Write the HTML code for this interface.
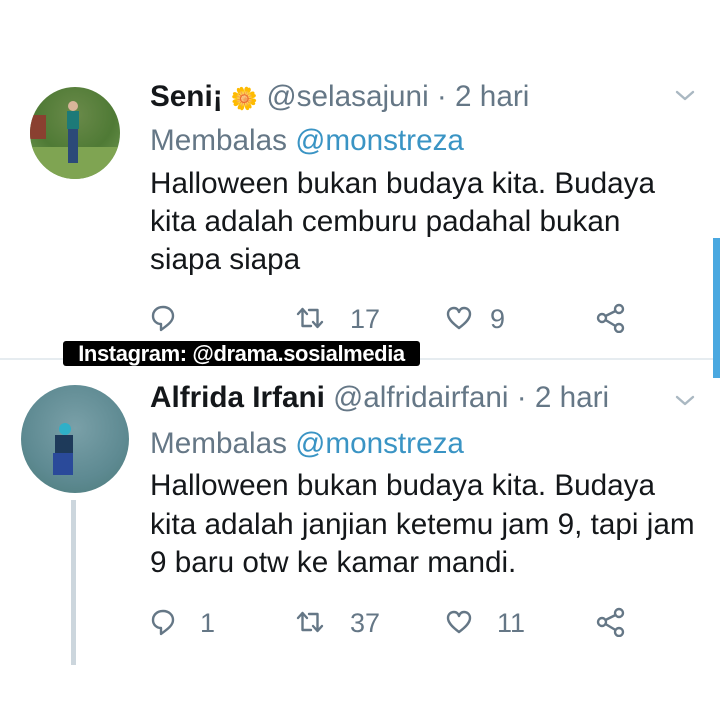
<!DOCTYPE html>
<html><head><meta charset="utf-8"><style>
body{margin:0;width:720px;height:720px;background:#fff;position:relative;overflow:hidden;font-family:"Liberation Sans",sans-serif;}
.a{position:absolute;white-space:nowrap;}
.t{font-size:29.7px;color:#14171a;}
.g{color:#657786;}
.b{color:#3a94c4;}
.n{font-weight:bold;color:#14171a;}
.cnt{font-size:27px;color:#657786;}
svg.i{position:absolute;fill:none;stroke:#657786;stroke-width:2.4;stroke-linecap:round;stroke-linejoin:round;}
</style></head><body>
<!-- avatar 1 -->
<div class="a" style="left:30px;top:87px;width:90px;height:92px;border-radius:50%;background:radial-gradient(circle at 50% 30%,#6a8a4a,#4f7a35 50%,#7aa05a);overflow:hidden">
 <div style="position:absolute;left:0;top:60px;width:90px;height:32px;background:#7fa452"></div>
 <div style="position:absolute;left:38px;top:14px;width:10px;height:10px;border-radius:50%;background:#d9b59a"></div>
 <div style="position:absolute;left:37px;top:24px;width:12px;height:18px;background:#1d7a78"></div>
 <div style="position:absolute;left:38px;top:42px;width:10px;height:34px;background:#2c4a78"></div>
 <div style="position:absolute;left:0;top:28px;width:16px;height:24px;background:#8a4030"></div>
</div>
<div class="a t" style="left:150px;top:80px;"><span class="n">Seni¡</span> <span style="font-size:22px">🌼</span> <span class="g">@selasajuni · 2 hari</span></div>
<svg class="i" style="left:674px;top:88px" width="22" height="16"><path d="M3 4 L11 11 L19 4" stroke="#aab8c2"/></svg>
<div class="a t g" style="left:150px;top:124px;">Membalas <span class="b">@monstreza</span></div>
<div class="a t" style="left:150px;top:165px;line-height:38px">Halloween bukan budaya kita. Budaya<br>kita adalah cemburu padahal bukan<br>siapa siapa</div>
<!-- actions 1 -->
<svg class="i" style="left:150px;top:304px" width="26" height="30"><path d="M13 3 C6 3 3 8 3 12 C3 17 7 20 11 20 L11 26 C16 22 23 18 23 12 C23 7 19 3 13 3Z"/></svg>
<svg class="i" style="left:295px;top:305px" width="30" height="26"><path d="M3 9 L7.5 4 L12 9 M7.5 4 V21 H16 M27 17 L22.5 22 L18 17 M22.5 22 V5 H14"/></svg>
<div class="a cnt" style="left:350px;top:304px">17</div>
<svg class="i" style="left:445px;top:305px" width="28" height="26"><path d="M14 23 C6 17 3 13 3 9 C3 5 6 3 9 3 C11 3 13 4 14 7 C15 4 17 3 19 3 C22 3 25 5 25 9 C25 13 22 17 14 23Z"/></svg>
<div class="a cnt" style="left:490px;top:304px">9</div>
<svg class="i" style="left:595px;top:303px" width="32" height="30"><circle cx="7" cy="15" r="4"/><circle cx="24" cy="6" r="4"/><circle cx="24" cy="25" r="4"/><path d="M10.5 13 L20.5 8 M10.5 17 L20.5 23"/></svg>
<!-- separator & scrollbar -->
<div class="a" style="left:0;top:358px;width:720px;height:2px;background:#e6ecf0"></div>
<div class="a" style="left:713px;top:238px;width:7px;height:140px;background:#4aa8e0"></div>
<div class="a" style="left:63px;top:341px;height:25px;width:357px;padding:0;background:#000;color:#fff;font-weight:bold;font-size:22px;line-height:25px;letter-spacing:-0.4px;border-radius:3px;text-align:center">Instagram: @drama.sosialmedia</div>
<!-- avatar 2 -->
<div class="a" style="left:21px;top:385px;width:108px;height:108px;border-radius:50%;background:radial-gradient(circle at 50% 40%,#7aa0a8,#5e8a92 60%,#4a7a78);overflow:hidden">
 <div style="position:absolute;left:38px;top:38px;width:12px;height:12px;border-radius:50%;background:#2fb0c8"></div>
 <div style="position:absolute;left:34px;top:50px;width:18px;height:18px;background:#1e3a5a"></div>
 <div style="position:absolute;left:32px;top:68px;width:20px;height:22px;background:#2a4a9a"></div>
</div>
<div class="a" style="left:71px;top:500px;width:5px;height:165px;background:#ccd6dd"></div>
<div class="a t" style="left:150px;top:381px;"><span class="n">Alfrida Irfani</span> <span class="g">@alfridairfani · 2 hari</span></div>
<svg class="i" style="left:674px;top:393px" width="22" height="16"><path d="M3 4 L11 11 L19 4" stroke="#aab8c2"/></svg>
<div class="a t g" style="left:150px;top:427px;">Membalas <span class="b">@monstreza</span></div>
<div class="a t" style="left:150px;top:467px;line-height:38.5px">Halloween bukan budaya kita. Budaya<br>kita adalah janjian ketemu jam 9, tapi jam<br>9 baru otw ke kamar mandi.</div>
<!-- actions 2 -->
<svg class="i" style="left:150px;top:608px" width="26" height="30"><path d="M13 3 C6 3 3 8 3 12 C3 17 7 20 11 20 L11 26 C16 22 23 18 23 12 C23 7 19 3 13 3Z"/></svg>
<div class="a cnt" style="left:200px;top:608px">1</div>
<svg class="i" style="left:295px;top:609px" width="30" height="26"><path d="M3 9 L7.5 4 L12 9 M7.5 4 V21 H16 M27 17 L22.5 22 L18 17 M22.5 22 V5 H14"/></svg>
<div class="a cnt" style="left:350px;top:608px">37</div>
<svg class="i" style="left:445px;top:609px" width="28" height="26"><path d="M14 23 C6 17 3 13 3 9 C3 5 6 3 9 3 C11 3 13 4 14 7 C15 4 17 3 19 3 C22 3 25 5 25 9 C25 13 22 17 14 23Z"/></svg>
<div class="a cnt" style="left:497px;top:608px">11</div>
<svg class="i" style="left:595px;top:607px" width="32" height="30"><circle cx="7" cy="15" r="4"/><circle cx="24" cy="6" r="4"/><circle cx="24" cy="25" r="4"/><path d="M10.5 13 L20.5 8 M10.5 17 L20.5 23"/></svg>
</body></html>
